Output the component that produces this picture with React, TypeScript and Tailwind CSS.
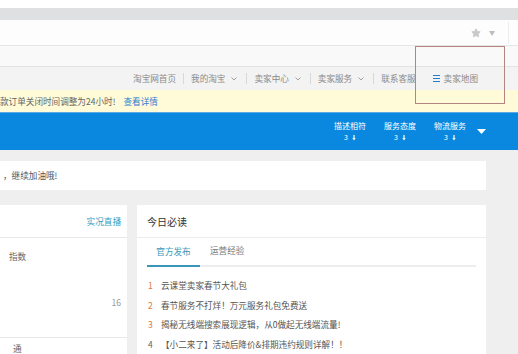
import { Star } from "lucide-react";

const font = "font-['Microsoft_YaHei','Noto_Sans_CJK_SC',sans-serif]";

function Caret() {
  return (
    <svg width="6" height="4" viewBox="0 0 6 4" className="ml-[6px] mr-[2px]">
      <path d="M0.5 0.5 L3 3 L5.5 0.5" fill="none" stroke="#999" strokeWidth="0.9" />
    </svg>
  );
}

function Sep() {
  return <span className="mx-[7px] h-[11px] w-px bg-[#d8d8d8]" />;
}

function Score({ label }: { label: string }) {
  return (
    <div className="flex w-[36px] flex-col items-center leading-none text-white">
      <span className="text-[8px]">{label}</span>
      <span className="mt-[4px] flex items-center gap-[4px] text-[7px]">
        3
        <svg width="4" height="6" viewBox="0 0 4 6">
          <path d="M2 0 V4" stroke="#fff" strokeWidth="1.2" />
          <path d="M0.3 3 L2 5.6 L3.7 3 Z" fill="#fff" />
        </svg>
      </span>
    </div>
  );
}

const news = [
  { n: "1", t: "云课堂卖家春节大礼包", hot: true },
  { n: "2", t: "春节服务不打烊！万元服务礼包免费送", hot: true },
  { n: "3", t: "揭秘无线端搜索展现逻辑，从0做起无线端流量!", hot: true },
  { n: "4", t: "【小二来了】活动后降价&排期违约规则详解！！", hot: false },
];

export default function App() {
  return (
    <div className={`relative h-[354px] w-[518px] overflow-hidden bg-[#efefef] ${font}`}>
      <div className="h-[8px] bg-white" />
      <div className="h-[12px] bg-[#dfe0e2]" />

      <div className="flex h-[26px] items-center justify-end border-b border-[#e6e6e6] bg-[#fdfdfd]">
        <Star size={10} className="fill-[#c9c9c9] text-[#c9c9c9]" />
        <span className="ml-[8px] mr-[13px] text-[6px] leading-none text-[#bbb]">▼</span>
        <span className="mr-[9px] h-[22px] w-px bg-[#ececec]" />
      </div>

      <div className="h-[21px] border-b border-[#e3e3e3] bg-[#f9f9f9]" />

      <div className="flex h-[23px] items-center justify-end bg-[#f3f3f3] pr-[40px] text-[8.6px] leading-none text-[#8a8a8a]">
        <span>淘宝网首页</span>
        <Sep />
        <span className="flex items-center">我的淘宝<Caret /></span>
        <Sep />
        <span className="flex items-center">卖家中心<Caret /></span>
        <Sep />
        <span className="flex items-center">卖家服务<Caret /></span>
        <Sep />
        <span>联系客服</span>
        <span className="ml-[17px] flex flex-col gap-[1.5px]">
          <span className="h-[1.5px] w-[7px] bg-[#1f7fd0]" />
          <span className="h-[1.5px] w-[7px] bg-[#1f7fd0]" />
          <span className="h-[1.5px] w-[7px] bg-[#1f7fd0]" />
        </span>
        <span className="ml-[4px]">卖家地图</span>
      </div>

      <div className="flex h-[22px] items-center bg-[#fffbd9] text-[8.6px] leading-none text-[#666]">
        <span className="whitespace-nowrap">款订单关闭时间调整为24小时!</span>
        <span className="ml-[8px] text-[#2f7fd0]">查看详情</span>
      </div>

      <div className="flex h-[38px] items-center justify-end gap-[14px] border-t border-[#5aa8e6] bg-[#0a88e0] pr-[32px]">
        <Score label="描述相符" />
        <Score label="服务态度" />
        <Score label="物流服务" />
        <svg width="9" height="5" viewBox="0 0 9 5" className="-ml-[5px]">
          <path d="M0 0 H9 L4.5 5 Z" fill="#fff" />
        </svg>
      </div>

      <div className="pr-[32px] pt-[11px]">
        <div className="flex h-[29px] items-center bg-white pl-[3px] text-[8.6px] text-[#555]">
          ，继续加油哦!
        </div>

        <div className="mt-[15px] flex gap-[10px]">
          <div className="h-[160px] w-[127px] bg-white">
            <div className="flex h-[33px] items-center justify-end border-b border-[#e8e8e8] pr-[6px] text-[8.6px] text-[#3a9cc0]">
              实况直播
            </div>
            <div className="flex h-[99px] flex-col pl-[9px] pr-[6px] text-[8.6px] text-[#666]">
              <div className="mt-[14px] leading-none">指数</div>
              <div className="mt-auto mb-[30px] self-end text-[8.6px] leading-none text-[#999]">16</div>
            </div>
            <div className="border-t border-[#e8e8e8] pl-[13px] pt-[6px] text-[8.6px] leading-none text-[#666]">
              通
            </div>
          </div>

          <div className="h-[160px] flex-1 bg-white">
            <div className="flex h-[33px] items-center border-b border-[#ececec] pl-[10px] text-[10px] text-[#333]">
              今日必读
            </div>
            <div className="mx-[10px] flex h-[29px] items-end border-b-2 border-[#ececec] text-[8.6px]">
              <span className="-mb-[2px] flex h-[29px] w-[53px] items-center justify-center border-b-2 border-[#3a96b8] text-[#3a96b8]">
                官方发布
              </span>
              <span className="ml-[10px] flex h-[29px] items-center text-[#777]">运营经验</span>
            </div>
            <div className="pl-[11px] pt-[9px]">
              {news.map((item) => (
                <div key={item.n} className="flex h-[19.5px] items-center text-[8.6px] leading-none text-[#555]">
                  <span className={`w-[13px] ${item.hot ? "text-[#e0793c]" : "text-[#666]"}`}>{item.n}</span>
                  <span className="whitespace-nowrap">{item.t}</span>
                </div>
              ))}
            </div>
          </div>
        </div>
      </div>

      <div className="absolute left-[415px] top-[46px] h-[58px] w-[90px] border border-[#b58481]" />
    </div>
  );
}
